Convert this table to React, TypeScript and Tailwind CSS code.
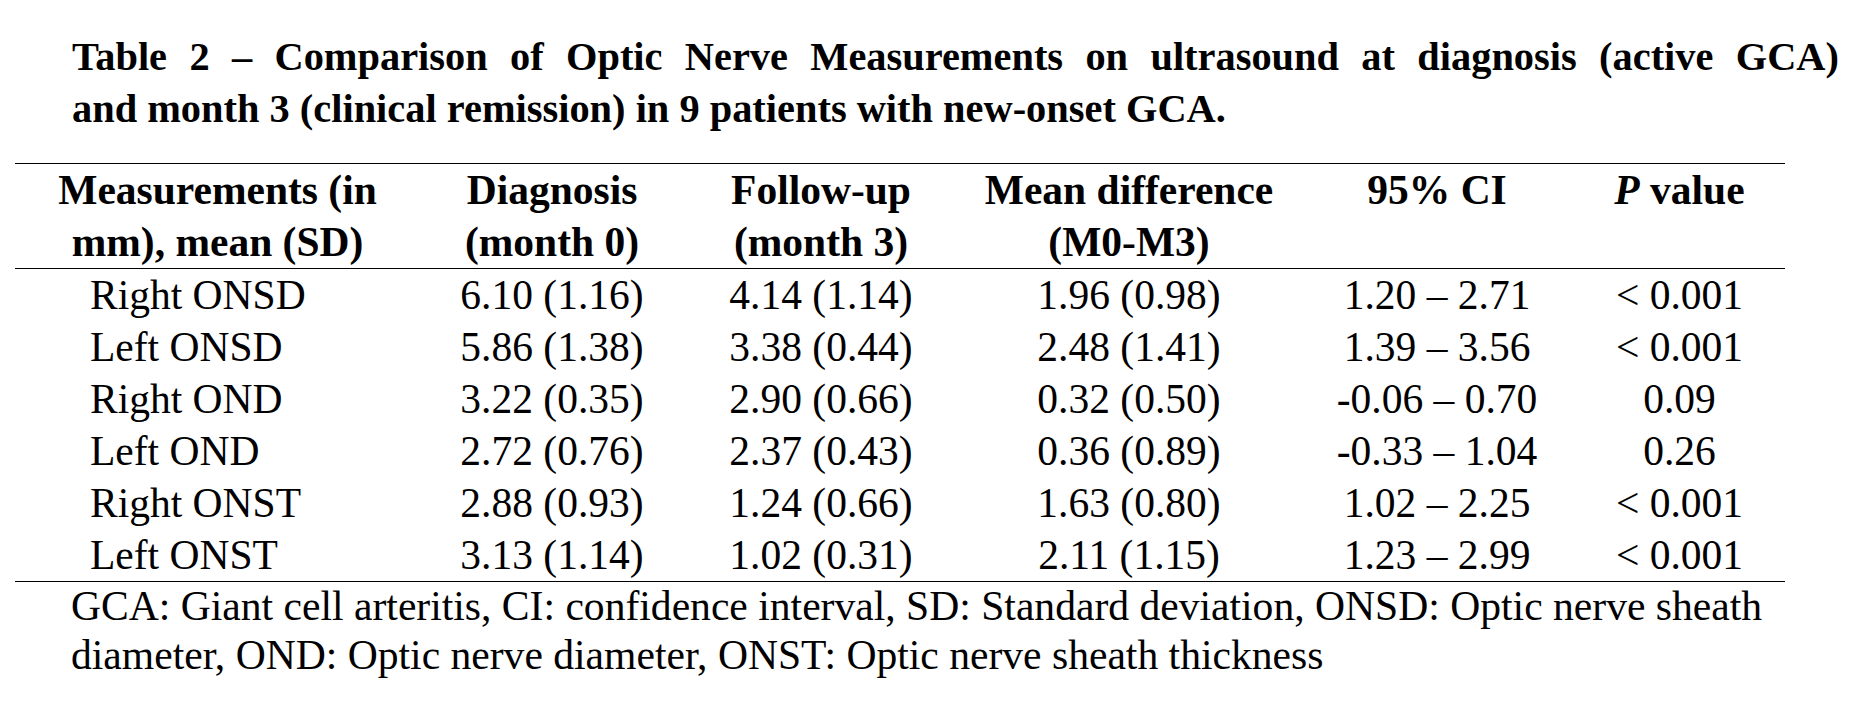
const COLS = "grid grid-cols-[405px_264px_274px_342px_274px_211px]";

const ROWS = [
  { name: "Right ONSD", dx: "6.10 (1.16)", fu: "4.14 (1.14)", diff: "1.96 (0.98)", ci: "1.20 – 2.71", p: "< 0.001" },
  { name: "Left ONSD", dx: "5.86 (1.38)", fu: "3.38 (0.44)", diff: "2.48 (1.41)", ci: "1.39 – 3.56", p: "< 0.001" },
  { name: "Right OND", dx: "3.22 (0.35)", fu: "2.90 (0.66)", diff: "0.32 (0.50)", ci: "-0.06 – 0.70", p: "0.09" },
  { name: "Left OND", dx: "2.72 (0.76)", fu: "2.37 (0.43)", diff: "0.36 (0.89)", ci: "-0.33 – 1.04", p: "0.26" },
  { name: "Right ONST", dx: "2.88 (0.93)", fu: "1.24 (0.66)", diff: "1.63 (0.80)", ci: "1.02 – 2.25", p: "< 0.001" },
  { name: "Left ONST", dx: "3.13 (1.14)", fu: "1.02 (0.31)", diff: "2.11 (1.15)", ci: "1.23 – 2.99", p: "< 0.001" },
];

export default function App() {
  return (
    <div className="w-[1860px] h-[727px] bg-white text-black font-['Liberation_Serif',serif]">
      {/* caption */}
      <div className="pt-[31px] pl-[72px] w-[1839px] text-[40.4px] font-bold leading-[52px]">
        <div className="text-justify [text-align-last:justify]">
          Table 2 – Comparison of Optic Nerve Measurements on ultrasound at diagnosis (active GCA)
        </div>
        <div>and month 3 (clinical remission) in 9 patients with new-onset GCA.</div>
      </div>

      <div className="mt-[28px] ml-[15px] w-[1770px] text-[41.5px]">
        <div className={`${COLS} border-t border-b border-black font-bold leading-[52px] text-center`}>
          <div>
            Measurements (in
            <br />
            mm), mean (SD)
          </div>
          <div>
            Diagnosis
            <br />
            (month 0)
          </div>
          <div>
            Follow-up
            <br />
            (month 3)
          </div>
          <div>
            Mean difference
            <br />
            (M0-M3)
          </div>
          <div>95% CI</div>
          <div>
            <i>P</i> value
          </div>
        </div>

        <div className="border-b border-black leading-[52px]">
          {ROWS.map((r) => (
            <div key={r.name} className={`${COLS} text-center`}>
              <div className="text-left pl-[75px]">{r.name}</div>
              <div>{r.dx}</div>
              <div>{r.fu}</div>
              <div>{r.diff}</div>
              <div>{r.ci}</div>
              <div>{r.p}</div>
            </div>
          ))}
        </div>
      </div>

      <div className="pl-[71px] text-[41.6px] leading-[49px]">
        GCA: Giant cell arteritis, CI: confidence interval, SD: Standard deviation, ONSD: Optic nerve sheath
        <br />
        diameter, OND: Optic nerve diameter, ONST: Optic nerve sheath thickness
      </div>
    </div>
  );
}
